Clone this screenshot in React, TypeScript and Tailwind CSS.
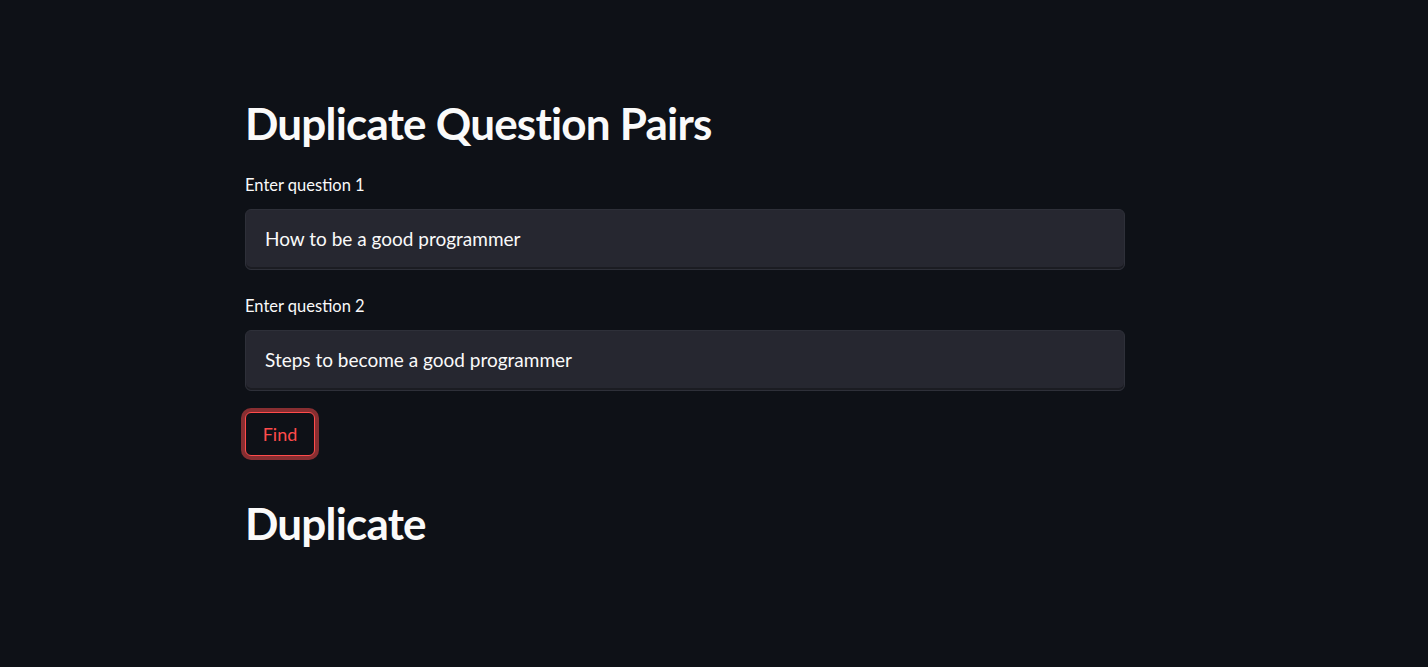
export default function App() {
  return (
    <div className="min-h-[667px] w-full bg-[#0e1117] text-[#fafafa] font-['Lato','Liberation_Sans',sans-serif]">
      <div className="w-[880px] ml-[245px] pt-[94px]">
        <h1 className="text-[44px] font-bold leading-[58px] tracking-[-0.8px] mb-[22px]">Duplicate Question Pairs</h1>

        <label className="block text-[16.5px] leading-[22px] mb-[13px]">Enter question 1</label>
        <div className="h-[61px] w-full rounded-[6px] border border-[#2e3039] bg-[#262730] shadow-[inset_0_-2px_0_#1b1c22] flex items-center px-[19px] text-[19px]">
          How to be a good programmer
        </div>

        <label className="block text-[16.5px] leading-[22px] mt-[25px] mb-[13px]">Enter question 2</label>
        <div className="h-[61px] w-full rounded-[6px] border border-[#2e3039] bg-[#262730] shadow-[inset_0_-2px_0_#1b1c22] flex items-center px-[19px] text-[19px]">
          Steps to become a good programmer
        </div>

        <button className="block mt-[21px] h-[44px] w-[70px] rounded-[6px] border border-[#ff4b4b] bg-[#0e1117] text-[#ff4b4b] text-[18px] shadow-[0_0_0_4px_rgba(255,75,75,0.5)]">
          Find
        </button>

        <h1 className="mt-[38px] text-[44px] font-bold leading-[58px] tracking-[-0.8px]">Duplicate</h1>
      </div>
    </div>
  )
}
